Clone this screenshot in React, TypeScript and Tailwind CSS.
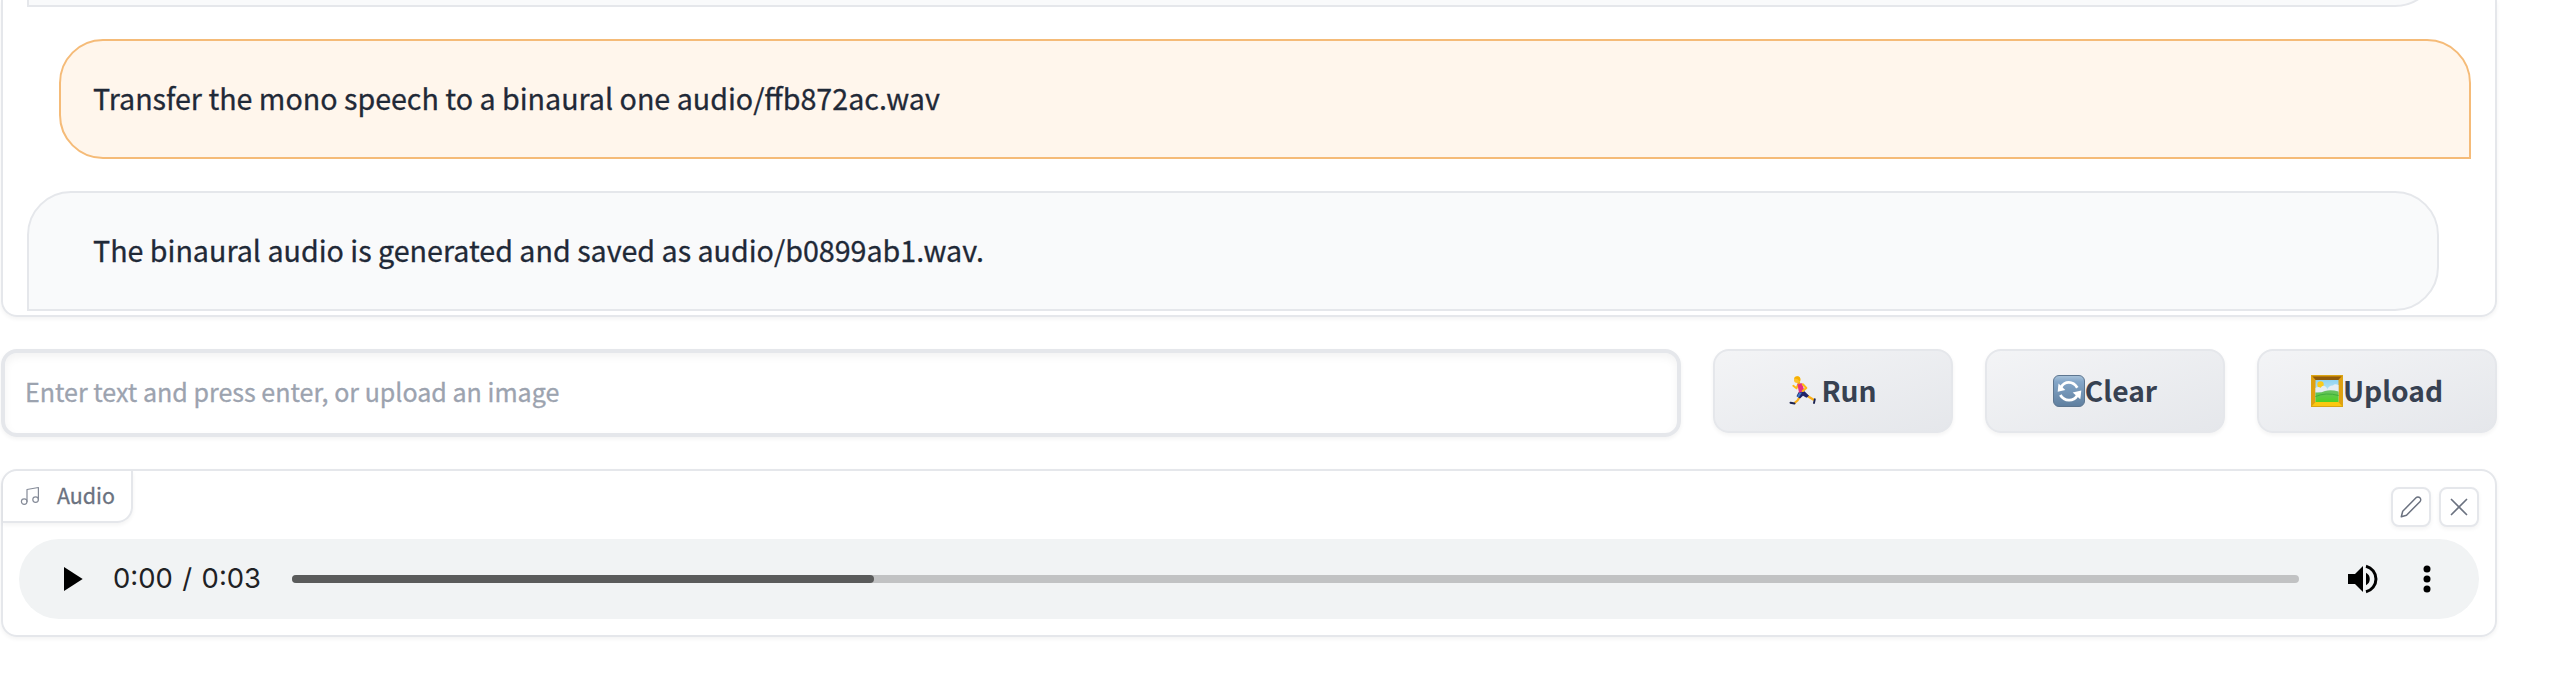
import React from "react";

function RunnerEmoji() {
  return (
    <svg width="32" height="32" viewBox="0 0 32 32" className="shrink-0">
      <path d="M11 21.500 L8.500 25.500 L5.500 28" fill="none" stroke="#fbae17" strokeWidth="2.200" strokeLinejoin="round" />
      <path d="M17 20 L20.500 22.200 L25 25" fill="none" stroke="#fbae17" strokeWidth="2.200" strokeLinejoin="round" />
      <path d="M1.500 27.700 L5.500 28.600" stroke="#1c2350" strokeWidth="2" strokeLinecap="round" />
      <path d="M25.800 24.300 L25 28" stroke="#1c2350" strokeWidth="1.900" strokeLinecap="round" />
      <path d="M9.500 17.300 L15.500 16.300 L20 20.800 L17.500 22.800 L14 20.800 L11 23.500 L7.500 21.300 Z" fill="#20246a" />
      <path d="M10 18 L13 17.600 L9.800 22.600 L8 21.400 Z" fill="#3d78c9" />
      <path d="M9 9.500 L7.500 13.300 L4.300 10.800" fill="none" stroke="#fdb913" strokeWidth="1.900" strokeLinecap="round" strokeLinejoin="round" />
      <path d="M8.300 8.500 L13 8.200 L15.500 16 L10 17.700 Z" fill="#e6307f" />
      <path d="M13.800 9.300 L17.300 13 L13.800 16" fill="none" stroke="#fdb913" strokeWidth="2.100" strokeLinecap="round" strokeLinejoin="round" />
      <path d="M9 6 L10.500 9" stroke="#f5a010" strokeWidth="2.200" />
      <circle cx="8.200" cy="4.700" r="3.200" fill="#fdc22c" />
      <path d="M5 3.600 Q6 0.800 9 1.300 Q12 2 11.200 5.500 L10 6.500 Q9.800 3.800 5 3.600 Z" fill="#f7b000" />
    </svg>
  );
}

function RefreshEmoji() {
  return (
    <svg width="32" height="32" viewBox="0 0 32 32" className="shrink-0">
      <defs>
        <linearGradient id="refresh-face" x1="0" y1="0" x2="0" y2="1">
          <stop offset="0" stopColor="#a9c3da" />
          <stop offset="0.200" stopColor="#84a6c8" />
          <stop offset="1" stopColor="#5f7f9f" />
        </linearGradient>
      </defs>
      <rect x="0.500" y="0.500" width="31" height="31" rx="5.500" fill="url(#refresh-face)" stroke="#5d7690" />
      <path d="M8 12.300 C11.500 6 20 5.500 24.300 12.800" fill="none" stroke="#fff" strokeWidth="2.800" />
      <path d="M4.700 16.800 L5.500 8.500 L12.300 15 Z" fill="#fff" />
      <path d="M7.300 20 C11.500 26.800 20.500 26.800 24.300 20.500" fill="none" stroke="#fff" strokeWidth="2.800" />
      <path d="M28.300 15.600 L27.300 24.300 L19.700 17.600 Z" fill="#fff" />
    </svg>
  );
}

function PictureEmoji() {
  return (
    <svg width="32" height="32" viewBox="0 0 32 32" className="shrink-0">
      <defs>
        <linearGradient id="sky" x1="0" y1="0" x2="0" y2="1">
          <stop offset="0" stopColor="#8fd3f0" />
          <stop offset="1" stopColor="#dff2fa" />
        </linearGradient>
        <linearGradient id="grass" x1="0" y1="0" x2="0" y2="1">
          <stop offset="0" stopColor="#6cc067" />
          <stop offset="1" stopColor="#4ed321" />
        </linearGradient>
      </defs>
      <rect width="32" height="32" fill="#d99a0b" />
      <path d="M0 0 H32 L27.500 5 H4.500 Z" fill="#b87a08" />
      <path d="M2 2 H30 L27.500 5 H4.500 Z" fill="#8f5c0c" />
      <path d="M0 0 L4.500 5 V27 L0 32 Z" fill="#e0a010" />
      <path d="M32 0 L27.500 5 V27 L32 32 Z" fill="#e0a010" />
      <path d="M0 32 L4.500 27 H27.500 L32 32 Z" fill="#fbc80f" />
      <rect x="0.500" y="0.500" width="31" height="31" fill="none" stroke="#dba514" />
      <rect x="4.500" y="5" width="23" height="22" fill="url(#sky)" />
      <circle cx="9.500" cy="9.500" r="3.200" fill="#fbcb1a" />
      <path d="M4.500 17.500 V13 Q7 11 9.500 13 Q11.500 9.500 14.500 11.500 Q16.500 13 16 14.500 Q18.500 10 22 10.500 Q23.500 8.500 27.500 10 V17.500 Z" fill="#e6edf2" />
      <path d="M4.500 17.500 Q10 18 14 16 Q20 14.500 27.500 16.500 V27 H4.500 Z" fill="url(#grass)" />
      <path d="M4.500 21.500 Q15 17 27.500 20.500" fill="none" stroke="#3fae3c" strokeWidth="1" />
    </svg>
  );
}

function MusicIcon() {
  return (
    <svg width="21" height="20" viewBox="0 0 21 20" fill="none" stroke="#858b98" strokeWidth="1.200" strokeLinecap="round" strokeLinejoin="round" className="shrink-0">
      <path d="M8 15.500V3.500l11.400-2v12" />
      <circle cx="5.200" cy="15.600" r="2.800" />
      <circle cx="16.600" cy="13.600" r="2.800" />
    </svg>
  );
}

function ActionButton({ icon, label }: { icon: React.ReactNode; label: string }) {
  return (
    <button className="flex h-[84px] w-60 items-center justify-center rounded-2xl border-2 border-[#e5e7eb] bg-linear-to-br from-[#f3f4f6] to-[#e5e7eb] text-[28.2px] leading-10 font-bold text-[#374151] shadow-[0_2px_4px_rgba(0,0,0,0.05)]">
      {icon}
      <span className="-mt-[3px]">{label}</span>
    </button>
  );
}

function ToolButton({ children }: { children: React.ReactNode }) {
  return (
    <button className="flex size-10 items-center justify-center rounded-lg border-2 border-[#e5e7eb] bg-white text-[#6b7280] shadow-[0_2px_4px_rgba(0,0,0,0.05)]">
      {children}
    </button>
  );
}

export default function App() {
  return (
    <div className="h-[676px] w-[2560px] overflow-hidden bg-white pl-px font-['Noto_Sans_CJK_SC',sans-serif] text-[#1f2937]">
      <div className="flex w-[2496px] flex-col gap-8">
        <section className="flex h-[317px] flex-col gap-8 overflow-hidden rounded-b-2xl border-2 border-t-0 border-[#e5e7eb] pl-6 shadow-[0_2px_4px_rgba(0,0,0,0.05)]">
          <div className="flex h-[7px] w-[2412px] shrink-0 flex-col justify-end overflow-hidden">
            <div className="h-[120px] shrink-0 rounded-[44px] rounded-bl-none border-2 border-[#e5e7eb] bg-[#f9fafb]" />
          </div>
          <div className="ml-8 flex h-[120px] w-[2412px] shrink-0 items-center rounded-[44px] rounded-br-none border-2 border-[#f5bb78] bg-[#fff6ec] pb-0.5 pl-8 text-[28.65px] [-webkit-text-stroke:0.3px_#1f2937]">
            Transfer the mono speech to a binaural one audio/ffb872ac.wav
          </div>
          <div className="flex h-[120px] w-[2412px] shrink-0 items-center rounded-[44px] rounded-bl-none border-2 border-[#e5e7eb] bg-[#f9fafb] pb-0.5 pl-16 text-[28.65px] [-webkit-text-stroke:0.3px_#1f2937]">
            The binaural audio is generated and saved as audio/b0899ab1.wav.
          </div>
        </section>

        <div className="flex h-[88px] gap-8">
          <input
            placeholder="Enter text and press enter, or upload an image"
            className="h-[88px] w-[1680px] rounded-2xl border-4 border-[#e5e7eb] px-5 pb-1 text-[25.06px] shadow-[0_2px_4px_rgba(0,0,0,0.05),inset_0_4px_8px_rgba(0,0,0,0.05)] placeholder:text-[#9ca3af] placeholder:[-webkit-text-stroke:0.3px_#9ca3af]"
          />
          <ActionButton icon={<RunnerEmoji />} label="Run" />
          <ActionButton icon={<RefreshEmoji />} label="Clear" />
          <ActionButton icon={<PictureEmoji />} label="Upload" />
        </div>

        <section className="h-[168px] rounded-2xl border-2 border-[#e5e7eb] shadow-[0_2px_4px_rgba(0,0,0,0.05)]">
          <div className="flex h-[68px] items-start justify-between pr-4">
            <div className="flex h-[52px] w-[130px] items-center gap-[17px] rounded-tl-[14px] rounded-br-2xl border-r-2 border-b-2 border-[#e5e7eb] pl-4 shadow-[0_2px_4px_rgba(0,0,0,0.05)]">
              <MusicIcon />
              <span className="-mt-[3px] text-[21.4px] leading-8 text-[#6b7280] [-webkit-text-stroke:0.3px_#6b7280]">Audio</span>
            </div>
            <div className="flex gap-2 pt-4">
              <ToolButton>
                <svg width="24" height="24" viewBox="0 0 24 24" fill="none" stroke="currentColor" strokeWidth="1.500" strokeLinecap="round" strokeLinejoin="round">
                  <path d="M17 2.800a2.700 2.700 0 1 1 3.900 3.900L7.500 20.200 2.300 21.700l1.400-5.400L17 2.800z" />
                </svg>
              </ToolButton>
              <ToolButton>
                <svg width="20" height="20" viewBox="0 0 20 20" fill="none" stroke="currentColor" strokeWidth="1.700" strokeLinecap="round">
                  <path d="M2.500 2.500 17.500 17.500M17.500 2.500 2.500 17.500" />
                </svg>
              </ToolButton>
            </div>
          </div>
          <div className="mx-4 flex h-20 items-center rounded-full bg-[#f1f3f4] pl-[45px]">
            <svg width="19" height="24" viewBox="0 0 19 24" className="shrink-0">
              <path d="M0 0 18.700 12 0 24Z" fill="#000" />
            </svg>
            <span className="ml-[30px] w-[148px] shrink-0 font-['Inter',sans-serif] text-[27.4px] whitespace-nowrap text-[#202124] [word-spacing:1.8px]">0:00 / 0:03</span>
            <div className="ml-[31px] h-2 w-[2007px] rounded-full bg-[#c1c2c3]">
              <div className="h-2 w-[582px] rounded-full bg-[#5a5b5b]" />
            </div>
            <svg width="30" height="30" viewBox="0 0 30 30" className="ml-[49px] shrink-0">
              <path d="M0 10h7l8-8v26l-8-8H0Z" fill="#000" />
              <path d="M18 8.800a7 7 0 0 1 0 12.400Z" fill="#000" />
              <path d="M18 2.200a13.200 13.200 0 0 1 0 25.600" fill="none" stroke="#000" strokeWidth="3" />
            </svg>
            <svg width="8" height="28" viewBox="0 0 8 28" className="ml-[45px] shrink-0">
              <circle cx="4" cy="4" r="3.500" />
              <circle cx="4" cy="14" r="3.500" />
              <circle cx="4" cy="24" r="3.500" />
            </svg>
          </div>
        </section>
      </div>
    </div>
  );
}
